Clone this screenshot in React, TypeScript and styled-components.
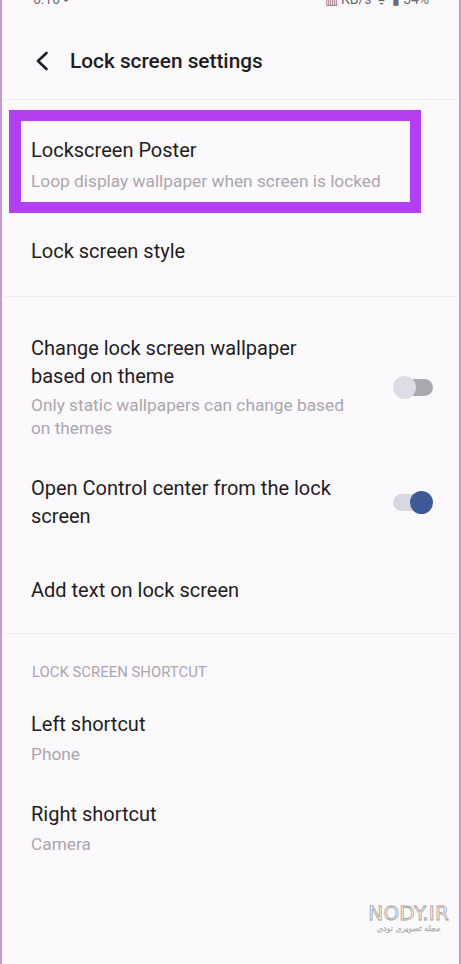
import React from "react";
import styled, { createGlobalStyle } from "styled-components";

const GlobalStyle = createGlobalStyle`
  body {
    margin: 0;
    background: #fcf9fd;
    font-family: Roboto, "Noto Sans", Arial, sans-serif;
    -webkit-font-smoothing: antialiased;
  }
`;

const Frame = styled.div`
  position: relative;
  box-sizing: border-box;
  width: 461px;
  min-height: 964px;
  background: #fcf9fd;
  border-left: 2px solid #c29ad4;
  border-right: 2px solid #c29ad4;
  overflow: hidden;
`;

const StatusBar = styled.div`
  height: 6px;
  overflow: hidden;
  display: flex;
  align-items: flex-end;
  justify-content: space-between;
  padding: 0 30px 0 31px;
  font-size: 14px;
  line-height: 14px;
  color: #6d6a70;
`;

const Header = styled.div`
  display: flex;
  align-items: center;
  gap: 21px;
  padding: 41px 0 24px 33px;
`;

const HeaderTitle = styled.h1`
  margin: 0;
  font-size: 20.8px;
  line-height: 28px;
  font-weight: 500;
  color: #1f1d22;
`;

const Divider = styled.div`
  height: 1px;
  margin: 0 2px;
  background: #f0ecf2;
`;

const Highlight = styled.div`
  box-sizing: border-box;
  width: 412px;
  margin: 10px 0 0 7px;
  border: 11px solid #b43ff0;
  border-left-width: 12px;
  padding: 15px 0 10px 10px;
`;

const Row = styled.div<{ $pt: number; $pb: number }>`
  display: flex;
  align-items: center;
  justify-content: space-between;
  padding: ${p => p.$pt}px 26px ${p => p.$pb}px 29px;
`;

const Texts = styled.div`
  display: flex;
  flex-direction: column;
  max-width: 350px;
`;

const Title = styled.div`
  font-size: 20px;
  line-height: 28px;
  color: #1f1d22;
  white-space: nowrap;
`;

const Sub = styled.div<{ $lh?: number; $mt?: number }>`
  margin-top: ${p => p.$mt ?? 4}px;
  font-size: 17.3px;
  line-height: ${p => p.$lh ?? 23}px;
  color: #aba6ae;
  white-space: nowrap;
`;

const SectionLabel = styled.div`
  padding: 28px 0 0 30px;
  font-size: 14.9px;
  line-height: 20px;
  color: #aaa6ad;
`;

const Switch = styled.div`
  position: relative;
  flex-shrink: 0;
  width: 40px;
  height: 23px;
`;

const Track = styled.div<{ $on: boolean }>`
  position: absolute;
  top: 3px;
  height: 17px;
  border-radius: 9px;
  left: ${p => (p.$on ? "0" : "12px")};
  right: ${p => (p.$on ? "12px" : "0")};
  background: ${p => (p.$on ? "#d8d7e2" : "#a9a8ae")};
`;

const Knob = styled.div<{ $on: boolean }>`
  position: absolute;
  top: 0;
  left: ${p => (p.$on ? "17px" : "0")};
  width: 23px;
  height: 23px;
  border-radius: 50%;
  background: ${p => (p.$on ? "#3d5a97" : "#dddce6")};
`;

const Watermark = styled.div`
  position: absolute;
  right: 10px;
  bottom: 30px;
  display: flex;
  flex-direction: column;
  align-items: center;
  color: #ffffff;
  -webkit-text-stroke: 0.8px #9c9c9c;
`;

const MarkBig = styled.div`
  font-family: "DejaVu Sans", sans-serif;
  font-size: 20px;
  line-height: 22px;
  letter-spacing: 0.2px;
`;

const MarkSmall = styled.div`
  font-family: "DejaVu Sans", sans-serif;
  font-size: 8px;
  line-height: 10px;
  -webkit-text-stroke: 0.4px #9c9c9c;
`;

const Toggle = ({ on }: { on: boolean }) => (
  <Switch>
    <Track $on={on} />
    <Knob $on={on} />
  </Switch>
);

const App = () => (
  <Frame>
    <GlobalStyle />
    <StatusBar>
      <span>6:10 ▪</span>
      <span>▥ KB/s ᯤ ▮ 54%</span>
    </StatusBar>

    <Header>
      <svg width="14" height="20" viewBox="0 0 14 20">
        <polyline points="11.5,2 3,10 11.5,18" fill="none" stroke="#1f1d22" strokeWidth="2.6" strokeLinecap="round" strokeLinejoin="round" />
      </svg>
      <HeaderTitle>Lock screen settings</HeaderTitle>
    </Header>
    <Divider />

    <Highlight>
      <Title>Lockscreen Poster</Title>
      <Sub $lh={22} $mt={6}>Loop display wallpaper when screen is locked</Sub>
    </Highlight>

    <Row $pt={24} $pb={31}>
      <Title>Lock screen style</Title>
    </Row>
    <Divider />

    <Row $pt={37} $pb={17}>
      <Texts>
        <Title>Change lock screen wallpaper<br />based on theme</Title>
        <Sub>Only static wallpapers can change based<br />on themes</Sub>
      </Texts>
      <Toggle on={false} />
    </Row>

    <Row $pt={17} $pb={17}>
      <Texts>
        <Title>Open Control center from the lock<br />screen</Title>
      </Texts>
      <Toggle on={true} />
    </Row>

    <Row $pt={29} $pb={29}>
      <Title>Add text on lock screen</Title>
    </Row>
    <Divider />

    <SectionLabel>LOCK SCREEN SHORTCUT</SectionLabel>

    <Row $pt={28} $pb={0}>
      <Texts>
        <Title>Left shortcut</Title>
        <Sub $lh={22} $mt={5}>Phone</Sub>
      </Texts>
    </Row>

    <Row $pt={35} $pb={0}>
      <Texts>
        <Title>Right shortcut</Title>
        <Sub $lh={22} $mt={5}>Camera</Sub>
      </Texts>
    </Row>

    <Watermark>
      <MarkBig>NODY.IR</MarkBig>
      <MarkSmall>مجله تصویری نودی</MarkSmall>
    </Watermark>
  </Frame>
);

export default App;
